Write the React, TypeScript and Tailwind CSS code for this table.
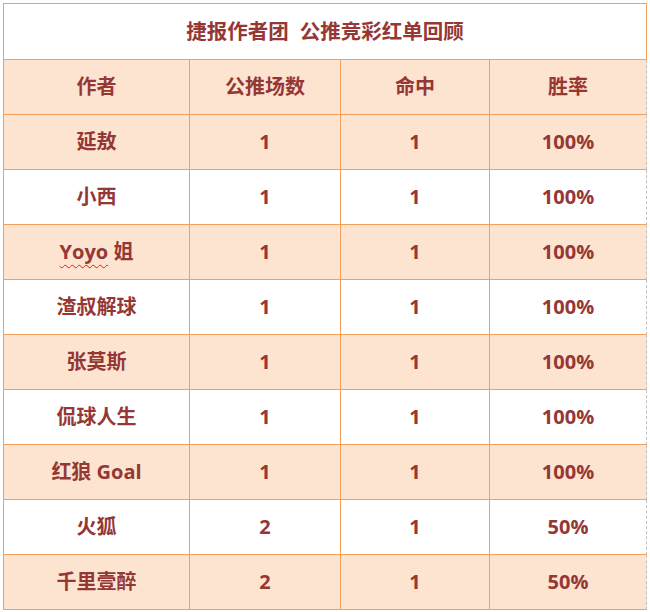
const rows = [
  { name: "延敖", picks: "1", hits: "1", rate: "100%" },
  { name: "小西", picks: "1", hits: "1", rate: "100%" },
  { name: "Yoyo 姐", picks: "1", hits: "1", rate: "100%" },
  { name: "渣叔解球", picks: "1", hits: "1", rate: "100%" },
  { name: "张莫斯", picks: "1", hits: "1", rate: "100%" },
  { name: "侃球人生", picks: "1", hits: "1", rate: "100%" },
  { name: "红狼 Goal", picks: "1", hits: "1", rate: "100%" },
  { name: "火狐", picks: "2", hits: "1", rate: "50%" },
  { name: "千里壹醉", picks: "2", hits: "1", rate: "50%" },
];

const font = {
  fontFamily: '"Open Sans", "Noto Sans CJK SC", sans-serif',
};

function Name({ name }: { name: string }) {
  if (name.startsWith("Yoyo")) {
    return (
      <span>
        <span className="underline decoration-wavy decoration-[#e02020] decoration-1 underline-offset-[5px]">
          Yoyo
        </span>{" "}
        姐
      </span>
    );
  }
  return <span>{name}</span>;
}

export default function App() {
  const cell =
    "h-[55px] flex items-center justify-center border-r border-b border-[#f5a05a]";
  // last column: solid orange bottom, dashed grey right edge
  const last =
    "h-[55px] flex items-center justify-center border-b border-b-[#f5a05a] border-r border-r-[#c0c0c0] [border-right-style:dashed]";

  return (
    <div className="w-[650px] h-[612px] bg-white pt-[3px] pl-[3px]" style={font}>
      <div className="w-[644px] border-t border-l border-[#f5a05a] text-[20px] font-bold text-[#953735]">
        {/* Title */}
        <div className="h-[56px] flex items-center justify-center border-r border-b border-[#f5a05a] text-[20.5px]">
          捷报作者团<span className="inline-block w-[11px]" />公推竞彩红单回顾
        </div>

        {/* Header */}
        <div className="grid grid-cols-[186px_151px_149px_157px] bg-[#fde4d1]">
          <div className={cell}>作者</div>
          <div className={cell}>公推场数</div>
          <div className={cell}>命中</div>
          <div className={last}>胜率</div>
        </div>

        {rows.map((r, i) => (
          <div
            key={r.name}
            className={`grid grid-cols-[186px_151px_149px_157px] ${
              i % 2 === 0 ? "bg-[#fde4d1]" : "bg-white"
            }`}
          >
            <div className={cell}>
              <Name name={r.name} />
            </div>
            <div className={cell}>{r.picks}</div>
            <div className={cell}>{r.hits}</div>
            <div className={last}>{r.rate}</div>
          </div>
        ))}
      </div>
    </div>
  );
}
